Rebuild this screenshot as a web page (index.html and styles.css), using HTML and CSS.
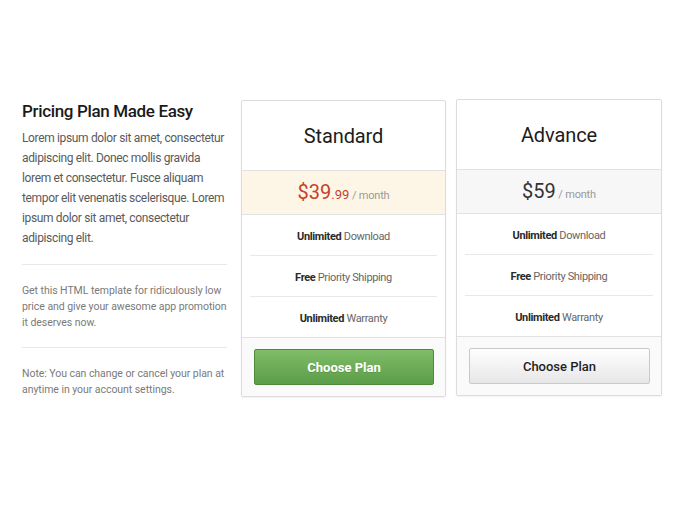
FILE: index.html
```html
<!DOCTYPE html>
<html>
<head>
<meta charset="utf-8">
<link rel="stylesheet" href="styles.css">
</head>
<body>
<div class="page">
  <div class="intro">
    <h1 class="intro-title">Pricing Plan Made Easy</h1>
    <p class="intro-lead">Lorem ipsum dolor sit amet, consectetur adipiscing elit. Donec mollis gravida lorem et consectetur. Fusce aliquam tempor elit venenatis scelerisque. Lorem ipsum dolor sit amet, consectetur adipiscing elit.</p>
    <p class="intro-note">Get this HTML template for ridiculously low price and give your awesome app promotion it deserves now.</p>
    <p class="intro-note intro-note-last">Note: You can change or cancel your plan at anytime in your account settings.</p>
  </div>

  <div class="plan plan-featured">
    <div class="plan-name">Standard</div>
    <div class="plan-price"><span class="amount">$39</span><span class="cents">.99</span><span class="period"> / month</span></div>
    <ul class="plan-features">
      <li><b>Unlimited</b> Download</li>
      <li><b>Free</b> Priority Shipping</li>
      <li><b>Unlimited</b> Warranty</li>
    </ul>
    <div class="plan-footer"><button class="btn btn-green">Choose Plan</button></div>
  </div>

  <div class="plan plan-alt">
    <div class="plan-name">Advance</div>
    <div class="plan-price"><span class="amount">$59</span><span class="period"> / month</span></div>
    <ul class="plan-features">
      <li><b>Unlimited</b> Download</li>
      <li><b>Free</b> Priority Shipping</li>
      <li><b>Unlimited</b> Warranty</li>
    </ul>
    <div class="plan-footer"><button class="btn btn-grey">Choose Plan</button></div>
  </div>
</div>
</body>
</html>
```

FILE: styles.css
```css
* { box-sizing: border-box; }
html, body {
  margin: 0;
  padding: 0;
  background: #ffffff;
  font-family: Roboto, "Liberation Sans", Arial, sans-serif;
}
.page {
  display: flex;
  align-items: flex-start;
  padding: 100px 0 0 22px;
}
.intro {
  width: 205px;
  margin-right: 14px;
  padding-top: 1px;
}
.intro-title {
  margin: 0;
  font-size: 17px;
  line-height: 20px;
  font-weight: 500;
  color: #1a1a1a;
  letter-spacing: -0.35px;
}
.intro-lead {
  margin: 7px 0 0;
  font-size: 12px;
  line-height: 20px;
  color: #5a5a5a;
  letter-spacing: -0.35px;
  padding-bottom: 16px;
  border-bottom: 1px solid #e8e8e8;
}
.intro-note {
  margin: 0;
  padding: 18px 0 16px;
  font-size: 10.5px;
  line-height: 16px;
  color: #7a7a7a;
  letter-spacing: -0.05px;
  border-bottom: 1px solid #e8e8e8;
}
.intro-note-last {
  border-bottom: none;
  padding-top: 18px;
}
.plan {
  width: 205px;
  border: 1px solid #dcdcdc;
  border-radius: 2px;
  background: #fff;
  box-shadow: 0 1px 2px rgba(0,0,0,0.06);
  text-align: center;
}
.plan-alt {
  width: 206px;
  margin-left: 10px;
  margin-top: -1px;
}
.plan-name {
  height: 70px;
  padding-top: 1px;
  line-height: 69px;
  font-size: 20px;
  color: #1c1c1c;
  letter-spacing: -0.1px;
  border-bottom: 1px solid #e2e2e2;
}
.plan-price {
  height: 44px;
  line-height: 43px;
  border-bottom: 1px solid #e2e2e2;
  white-space: nowrap;
}
.plan-featured .plan-price { background: #fdf6e6; }
.plan-alt .plan-price { background: #f7f7f7; }
.amount {
  font-size: 20px;
}
.plan-featured .amount, .plan-featured .cents { color: #c8412b; }
.plan-alt .amount { color: #333; }
.cents {
  font-size: 13px;
}
.period {
  font-size: 11px;
  color: #999;
  letter-spacing: -0.2px;
}
.plan-features {
  list-style: none;
  margin: 0;
  padding: 0 8px;
}
.plan-features li {
  height: 41px;
  padding-top: 14px;
  font-size: 11px;
  line-height: 16px;
  color: #666;
  letter-spacing: -0.35px;
  border-bottom: 1px solid #e8e8e8;
}
.plan-features li:last-child {
  height: 40px;
  border-bottom: none;
}
.plan-features b {
  color: #2a2a2a;
  font-weight: 700;
}
.plan-footer {
  background: #fafafa;
  border-top: 1px solid #e2e2e2;
  padding: 11px 11px 11px 12px;
}
.btn {
  display: block;
  width: 100%;
  height: 36px;
  padding-top: 1px;
  border-radius: 2px;
  font-family: Roboto, "Liberation Sans", Arial, sans-serif;
  font-size: 13px;
  font-weight: 700;
  cursor: pointer;
}
.btn-green {
  color: #fff;
  background: linear-gradient(#7fbd68, #5b9d48);
  border: 1px solid #4d8a3c;
  text-shadow: 0 1px 0 rgba(0,0,0,0.15);
}
.btn-grey {
  color: #1e1e1e;
  font-weight: 500;
  background: linear-gradient(#fefefe, #e7e7e7);
  border: 1px solid #c9c9c9;
}
```
